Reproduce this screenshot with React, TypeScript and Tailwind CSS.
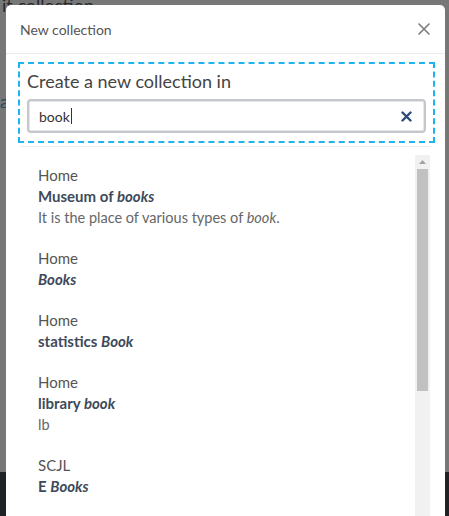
import React from "react";

const items = [
  { parent: "Home", title: <>Museum of <em>books</em></>, desc: <>It is the place of various types of <em>book</em>.</> },
  { parent: "Home", title: <em>Books</em> },
  { parent: "Home", title: <>statistics <em>Book</em></> },
  { parent: "Home", title: <>library <em>book</em></>, desc: <>lb</> },
  { parent: "SCJL", title: <>E <em>Books</em></> },
];

export default function App() {
  return (
    <div className="relative h-[516px] w-[449px] overflow-hidden bg-[#777777]" style={{ fontFamily: "Lato, 'Noto Sans', sans-serif" }}>
      {/* page behind overlay */}
      <div className="flex h-full flex-col">
        <div className="px-[2px] text-[18px] leading-[10px] text-[#2a2a2a]">it collection</div>
        <div className="mt-[78px] text-[18px] text-[#1e4d5c]">ar</div>
        <div className="flex-1" />
        <div className="h-[44px] bg-[#1f2328]" />
      </div>

      {/* modal */}
      <div className="absolute left-[6px] top-[5px] w-[439px] rounded-t-[5px] bg-white">
        <div className="flex h-[49px] items-center justify-between border-b border-[#e9ecef] pl-[14px] pr-[14px]">
          <span className="text-[14px] text-[#555]">New collection</span>
          <svg width="12" height="12" viewBox="0 0 12 12" className="mr-[1px]">
            <path d="M1 1L11 11M11 1L1 11" stroke="#7a7a7a" strokeWidth="1.6" strokeLinecap="round" />
          </svg>
        </div>
        <div className="pl-[12px] pr-[10px] pt-[8px]">
          <div className="border-2 border-dashed border-[#1fb4ee] px-[7px] pb-[8px] pt-[3px]">
            <div className="text-[18px] leading-[28px] text-[#444]">Create a new collection in</div>
            <div className="mt-[4px] flex h-[34px] items-center justify-between rounded-[4px] border-2 border-[#c4c8cd] bg-white pl-[10px] pr-[12px] shadow-[inset_0_0_0_1px_#e6e8eb]">
              <span className="flex items-center text-[14px] text-[#333]">
                book<span className="ml-[1px] inline-block h-[16px] w-px bg-[#333]" />
              </span>
              <svg width="11" height="11" viewBox="0 0 11 11">
                <path d="M1.5 1.5L9.5 9.5M9.5 1.5L1.5 9.5" stroke="#2c4a7a" strokeWidth="2.4" strokeLinecap="round" />
              </svg>
            </div>
          </div>
        </div>
        <div className="mx-[14px] mt-[3px] border-t border-[#eeeeee]" />
        <div className="mt-[8px] flex pl-[32px] pr-[15px]">
          <div className="flex-1">
            {items.map((it, i) => (
              <div key={i} className="py-[10px] text-[15px] leading-[21px]">
                <div className="text-[#555]">{it.parent}</div>
                <div className="font-bold text-[#3e4a5a]">{it.title}</div>
                {it.desc && <div className="text-[14.5px] text-[#666]">{it.desc}</div>}
              </div>
            ))}
          </div>
          <div className="flex w-[15px] flex-col bg-[#f1f1f1]">
            <div className="flex h-[14px] items-center justify-center">
              <svg width="7" height="4" viewBox="0 0 7 4"><path d="M0 4L3.5 0L7 4Z" fill="#a3a3a3" /></svg>
            </div>
            <div className="mx-[2px] h-[222px] bg-[#c1c1c1]" />
            <div className="h-[200px]" />
          </div>
        </div>
      </div>
    </div>
  );
}
